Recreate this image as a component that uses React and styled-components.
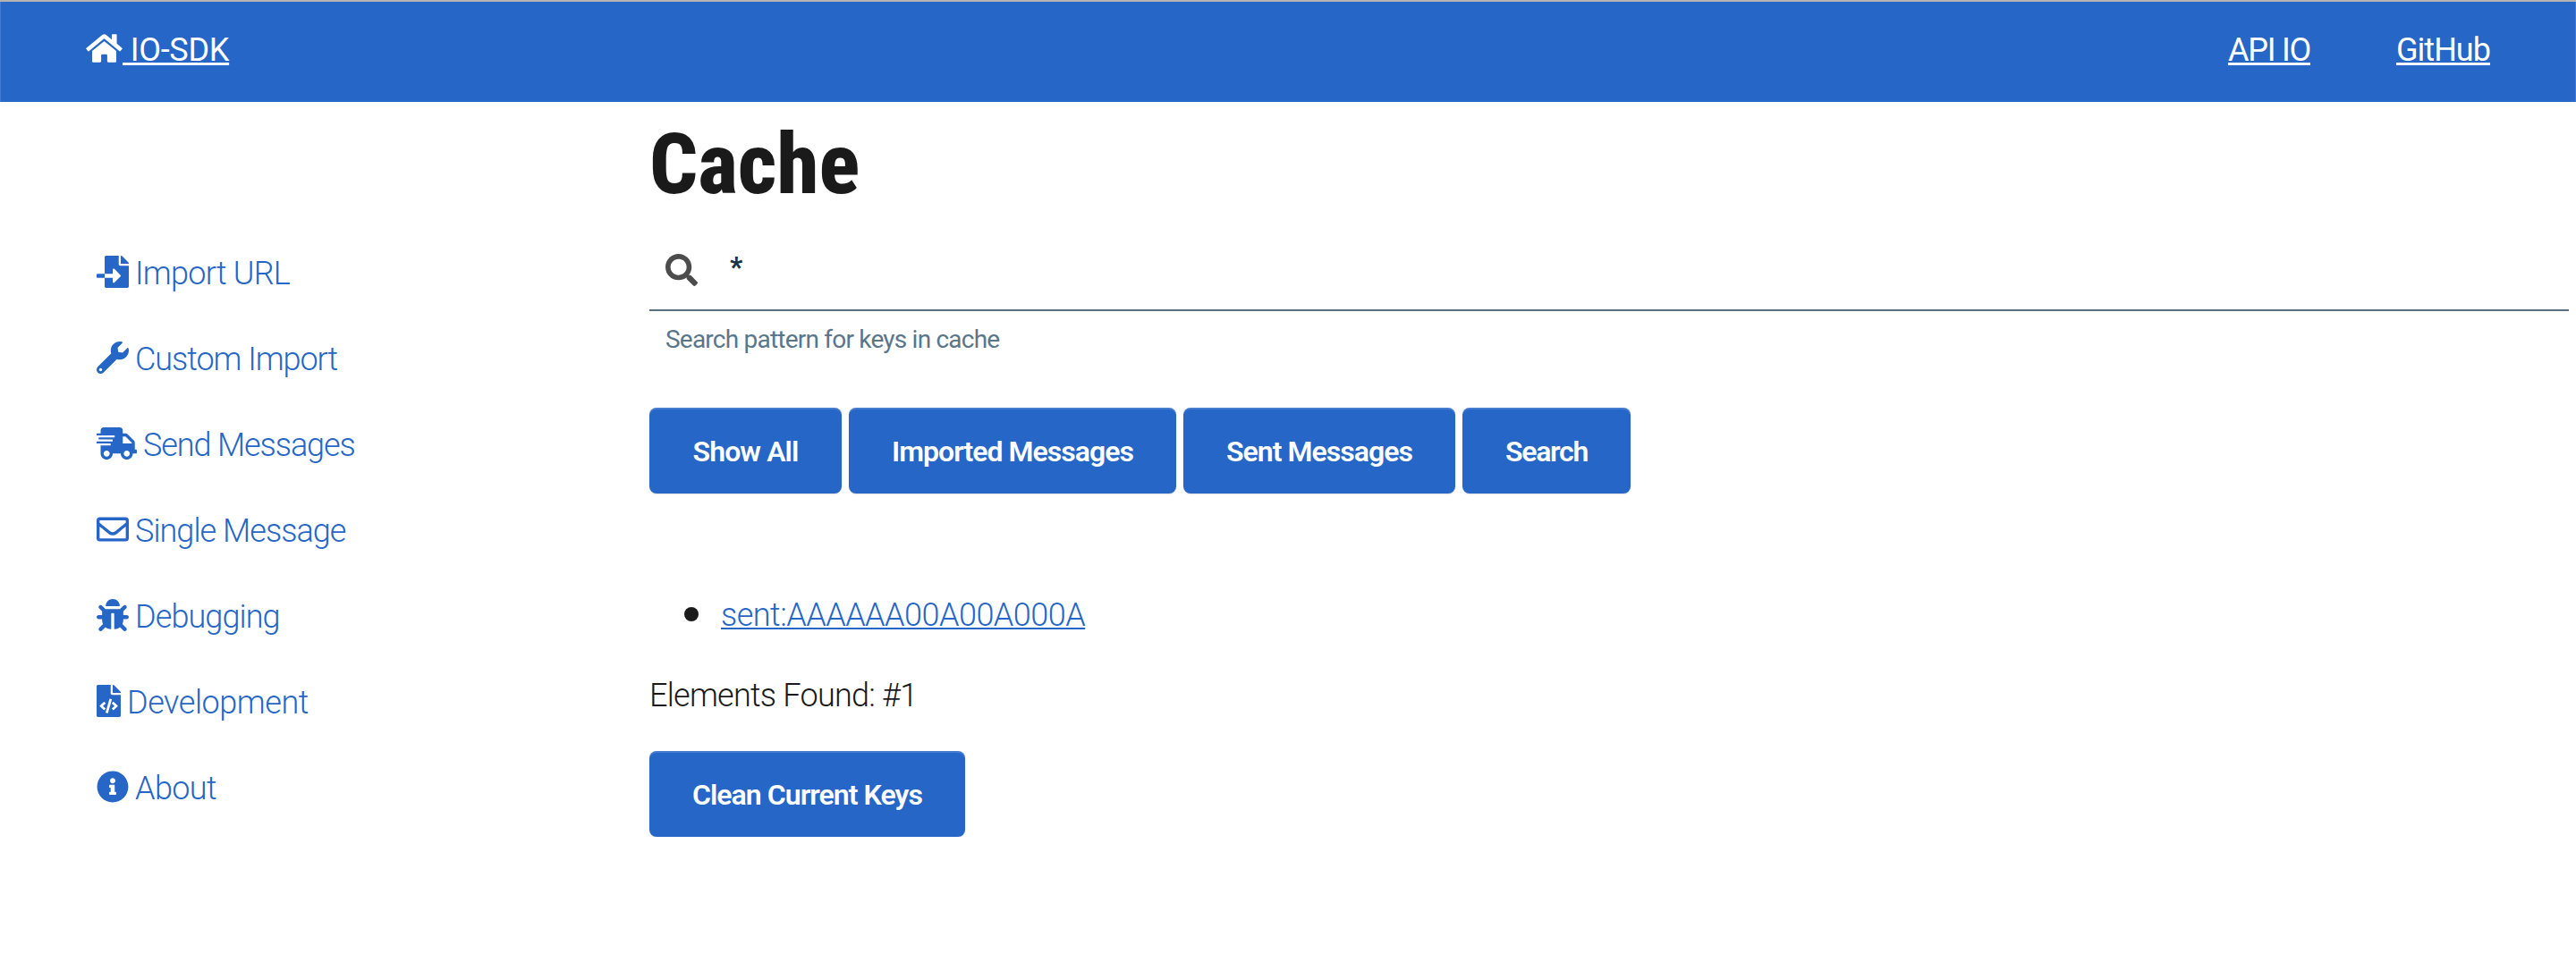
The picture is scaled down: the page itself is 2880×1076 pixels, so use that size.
import React from "react";
import styled, { createGlobalStyle } from "styled-components";
import {
  FaHome,
  FaFileImport,
  FaWrench,
  FaShippingFast,
  FaRegEnvelope,
  FaBug,
  FaFileCode,
  FaInfoCircle,
  FaSearch,
} from "react-icons/fa";

const blue = "#2566c6";
const ink = "#1a1a1a";

const GlobalStyle = createGlobalStyle`
  *, *::before, *::after { box-sizing: border-box; }
  body {
    margin: 0;
    background: #fff;
    color: ${ink};
    font-family: Roboto, "Liberation Sans", sans-serif;
    font-size: 36px;
    font-weight: 300;
  }
`;

const Text = styled.span`
  white-space: pre;
  letter-spacing: ${(p) => p.$track || 0}px;
`;

const Header = styled.header`
  display: flex;
  justify-content: space-between;
  align-items: flex-start;
  height: 114px;
  padding: 32px 96px 0;
  border-top: 2px solid #b4b4b4;
  background: ${blue};
  box-shadow: inset 1px 0 #427bcf, inset -1px 0 #427bcf;
  color: #fff;
  font-weight: 400;
`;

const HeaderLink = styled.a`
  display: flex;
  align-items: center;
  height: 40px;
  color: inherit;
  line-height: 40px;

  svg {
    width: 41px;
    height: 36px;
  }

  ${Text} {
    padding-top: 3px;
    text-decoration: underline;
    text-decoration-thickness: 2px;
    text-underline-offset: 2px;
    text-decoration-skip-ink: none;
  }
`;

const HeaderNav = styled.nav`
  display: flex;
  gap: 96px;
`;

const Layout = styled.div`
  display: flex;
`;

const Sidebar = styled.nav`
  flex: 0 0 726px;
  display: flex;
  flex-direction: column;
  padding: 142px 0 0 108px;
`;

const SideLink = styled.a`
  display: flex;
  align-items: center;
  gap: 7px;
  height: 96px;
  color: ${blue};
  text-decoration: none;

  svg {
    flex: none;
    width: ${(p) => p.$icon}px;
    height: 36px;
  }

  ${Text} {
    padding-top: 3px;
  }
`;

const Main = styled.main`
  flex: 1;
  display: flex;
  flex-direction: column;
  align-items: flex-start;
  padding-right: 8px;
`;

const Title = styled.h1`
  margin: 22px 0 0;
  height: 96px;
  line-height: 96px;
  font-family: "Roboto Condensed", Roboto, sans-serif;
  font-size: 95px;
  font-weight: 800;
`;

const SearchField = styled.div`
  display: flex;
  align-items: center;
  align-self: stretch;
  height: 100px;
  margin-top: 16px;
  padding: 12px 18px 0;
  border-bottom: 2px solid #5c6f82;

  svg {
    width: 36px;
    height: 36px;
    margin-top: -2px;
    color: #4c4c4c;
  }
`;

const SearchInput = styled.input`
  flex: 1;
  height: 60px;
  margin: -10px 0 0 36px;
  padding: 0;
  border: 0;
  outline: 0;
  background: transparent;
  color: #19324b;
  font: 800 31px "Roboto Condensed", Roboto, sans-serif;
`;

const Hint = styled.small`
  margin: 14px 0 0 18px;
  height: 36px;
  line-height: 36px;
  color: #5a768a;
  font-size: 28px;
  font-weight: 400;
`;

const Actions = styled.div`
  display: flex;
  gap: 8px;
  margin-top: ${(p) => p.$top}px;
`;

const Button = styled.button`
  width: ${(p) => p.$width}px;
  height: 96px;
  padding: 2px 0 0;
  border: 0;
  border-radius: 8px;
  background: ${blue};
  box-shadow: inset 0 2px rgba(255, 255, 255, 0.15), 0 1px 2px rgba(0, 0, 0, 0.12);
  color: #fff;
  font: 600 32px Roboto, "Liberation Sans", sans-serif;
`;

const Keys = styled.ul`
  display: flex;
  flex-direction: column;
  margin: 108px 0 0;
  padding: 0;
  list-style: none;
`;

const KeyItem = styled.li`
  display: flex;
  align-items: center;
  height: 54px;
  padding-left: 39px;

  &::before {
    content: "";
    width: 16px;
    height: 16px;
    margin-right: 25px;
    border-radius: 50%;
    background: ${ink};
  }
`;

const KeyLink = styled.a`
  padding-top: 2px;
  color: ${blue};
  text-decoration: underline;
  text-decoration-thickness: 2px;
  text-underline-offset: 2px;
  text-decoration-skip-ink: none;
`;

const Count = styled.p`
  margin: 36px 0 0;
  height: 54px;
  line-height: 56px;
`;

const menu = [
  { icon: FaFileImport, size: 36, label: "Import URL", track: -0.75 },
  { icon: FaWrench, size: 36, label: "Custom Import", track: -1.05 },
  { icon: FaShippingFast, size: 45, label: "Send Messages", track: -1.1 },
  { icon: FaRegEnvelope, size: 36, label: "Single Message", track: -0.95 },
  { icon: FaBug, size: 36, label: "Debugging", track: -0.9 },
  { icon: FaFileCode, size: 27, label: "Development", track: -0.45 },
  { icon: FaInfoCircle, size: 36, label: "About", track: -0.6 },
];

const filters = [
  { label: "Show All", width: 215, track: -0.9 },
  { label: "Imported Messages", width: 366, track: -0.97 },
  { label: "Sent Messages", width: 304, track: -0.96 },
  { label: "Search", width: 188, track: -1.25 },
];

export default function App() {
  return (
    <>
      <GlobalStyle />
      <Header>
        <HeaderLink href="#">
          <FaHome />
          <Text $track={-0.28}> IO-SDK</Text>
        </HeaderLink>
        <HeaderNav>
          <HeaderLink href="#"><Text $track={-1.25}>API IO</Text></HeaderLink>
          <HeaderLink href="#"><Text $track={-0.97}>GitHub</Text></HeaderLink>
        </HeaderNav>
      </Header>
      <Layout>
        <Sidebar>
          {menu.map(({ icon: Icon, size, label, track }) => (
            <SideLink key={label} href="#" $icon={size}>
              <Icon />
              <Text $track={track}>{label}</Text>
            </SideLink>
          ))}
        </Sidebar>
        <Main>
          <Title><Text>Cache</Text></Title>
          <SearchField>
            <FaSearch />
            <SearchInput defaultValue="*" />
          </SearchField>
          <Hint><Text $track={-0.78}>Search pattern for keys in cache</Text></Hint>
          <Actions $top={58}>
            {filters.map(({ label, width, track }) => (
              <Button key={label} $width={width}><Text $track={track}>{label}</Text></Button>
            ))}
          </Actions>
          <Keys>
            <KeyItem><KeyLink href="#"><Text $track={-0.52}>sent:AAAAAA00A00A000A</Text></KeyLink></KeyItem>
          </Keys>
          <Count><Text $track={-0.75}>Elements Found: #1</Text></Count>
          <Actions $top={36}>
            <Button $width={353}><Text $track={-0.94}>Clean Current Keys</Text></Button>
          </Actions>
        </Main>
      </Layout>
    </>
  );
}
